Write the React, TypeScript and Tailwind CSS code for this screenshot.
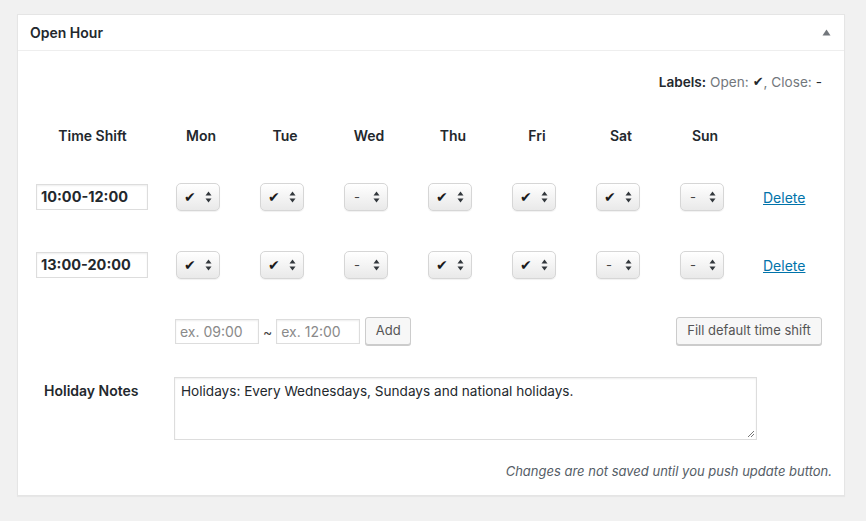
import React from "react";

const days = ["Mon", "Tue", "Wed", "Thu", "Fri", "Sat", "Sun"];
const rows = [
  { time: "10:00-12:00", vals: [true, true, false, true, true, true, false] },
  { time: "13:00-20:00", vals: [true, true, false, true, true, false, false] },
];

function Arrows() {
  return (
    <svg width="7" height="12" viewBox="0 0 7 12" className="shrink-0">
      <path d="M3.5 0.5 L6.5 4.5 L0.5 4.5 Z" fill="#32373c" />
      <path d="M3.5 11.5 L6.5 7.5 L0.5 7.5 Z" fill="#32373c" />
    </svg>
  );
}

function Sel({ open }: { open: boolean }) {
  return (
    <div className="ml-[17px] flex h-[28px] w-[44px] items-center justify-between rounded-[5px] border border-[#d6d6d6] bg-gradient-to-b from-[#ffffff] to-[#e9e9e9] pl-[7px] pr-[7px] shadow-[0_1px_1px_rgba(0,0,0,0.06)]">
      {open ? (
        <span className="text-[14px] leading-none text-[#1a1a1a]" style={{ fontFamily: '"DejaVu Sans", sans-serif' }}>
          ✔
        </span>
      ) : (
        <span className="ml-[2px] text-[13px] leading-none text-[#444]">-</span>
      )}
      <Arrows />
    </div>
  );
}

export default function App() {
  return (
    <div
      className="h-[521px] w-[866px] bg-[#f1f1f1] pl-[17px] pt-[14px] text-[#23282d]"
      style={{ fontFamily: 'Inter, "Noto Sans", "Liberation Sans", sans-serif' }}
    >
      <div className="w-[828px] border border-[#e5e5e5] bg-white shadow-[0_1px_1px_rgba(0,0,0,0.04)]">
        <div className="flex h-[36px] items-center justify-between border-b border-[#eeeeee] pl-[12px] pr-[13px]">
          <span className="text-[14px] font-semibold">Open Hour</span>
          <svg width="9" height="7" viewBox="0 0 9 7">
            <path d="M4.5 0.5 L8.5 6.5 L0.5 6.5 Z" fill="#72777c" />
          </svg>
        </div>
        <div className="pb-[13px]">
          <div className="flex items-center justify-end pr-[22px] pt-[21px] text-[13.6px] leading-[20px]">
            <span className="font-semibold">Labels:</span>
            <span className="ml-[4px] text-[#72777c]">Open:</span>
            <span className="ml-[4px] text-[13px]" style={{ fontFamily: '"DejaVu Sans", sans-serif' }}>✔</span>
            <span className="text-[#72777c]">, Close:</span>
            <span className="ml-[4px]">-</span>
          </div>

          <div className="mt-[23px] grid grid-cols-[141px_repeat(7,84px)_1fr]">
            <div className="flex h-[40px] items-center justify-center pl-[8px] text-[14px] font-semibold">Time Shift</div>
            {days.map((d) => (
              <div key={d} className="flex h-[40px] items-center justify-center text-[14px] font-semibold">
                {d}
              </div>
            ))}
            <div />

            <div className="col-span-9 h-[8px]" />

            {rows.map((r) => (
              <React.Fragment key={r.time}>
                <div className="flex h-[68px] items-center pl-[18px]">
                  <div className="flex h-[26px] w-[112px] items-center border border-[#dddddd] pl-[4px] text-[14.5px] font-bold shadow-[inset_0_1px_2px_rgba(0,0,0,0.07)]">
                    {r.time}
                  </div>
                </div>
                {r.vals.map((v, i) => (
                  <div key={i} className="flex h-[68px] items-center">
                    <Sel open={v} />
                  </div>
                ))}
                <div className="flex h-[68px] items-center pl-[16px]">
                  <a className="text-[14px] text-[#0073aa] underline">Delete</a>
                </div>
              </React.Fragment>
            ))}
          </div>

          <div className="flex h-[64px] items-center pl-[157px] pr-[22px]">
            <div className="flex h-[25px] w-[84px] items-center border border-[#dddddd] pl-[4px] text-[14px] text-[#8a8a8a] shadow-[inset_0_1px_2px_rgba(0,0,0,0.07)]">
              ex. 09:00
            </div>
            <span className="ml-[4px] mr-[4px] text-[14px] text-[#444]">~</span>
            <div className="flex h-[25px] w-[84px] items-center border border-[#dddddd] pl-[4px] text-[14px] text-[#8a8a8a] shadow-[inset_0_1px_2px_rgba(0,0,0,0.07)]">
              ex. 12:00
            </div>
            <button className="ml-[5px] flex h-[28px] w-[46px] items-center justify-center rounded-[3px] border border-[#cccccc] bg-[#f7f7f7] text-[13px] text-[#555] shadow-[0_1px_0_#cccccc]">
              Add
            </button>
            <div className="flex-1" />
            <button className="flex h-[28px] w-[146px] items-center justify-center rounded-[3px] border border-[#cccccc] bg-[#f7f7f7] text-[13px] text-[#555] shadow-[0_1px_0_#cccccc]">
              Fill default time shift
            </button>
          </div>

          <div className="mt-[14px] flex">
            <div className="w-[156px] pl-[26px] pt-[3px] text-left text-[14px] font-semibold">Holiday Notes</div>
            <div className="relative h-[63px] w-[583px] border border-[#dddddd] px-[6px] pt-[3px] text-[13.6px] shadow-[inset_0_1px_2px_rgba(0,0,0,0.07)]">
              Holidays: Every Wednesdays, Sundays and national holidays.
              <svg width="8" height="8" viewBox="0 0 8 8" className="absolute bottom-[1px] right-[1px]">
                <path d="M7 1 L1 7 M7 4 L4 7" stroke="#777" strokeWidth="1" />
              </svg>
            </div>
          </div>

          <div className="mt-[22px] pr-[12px] text-right text-[13px] italic text-[#555d66]">
            Changes are not saved until you push update button.
          </div>
        </div>
      </div>
    </div>
  );
}
